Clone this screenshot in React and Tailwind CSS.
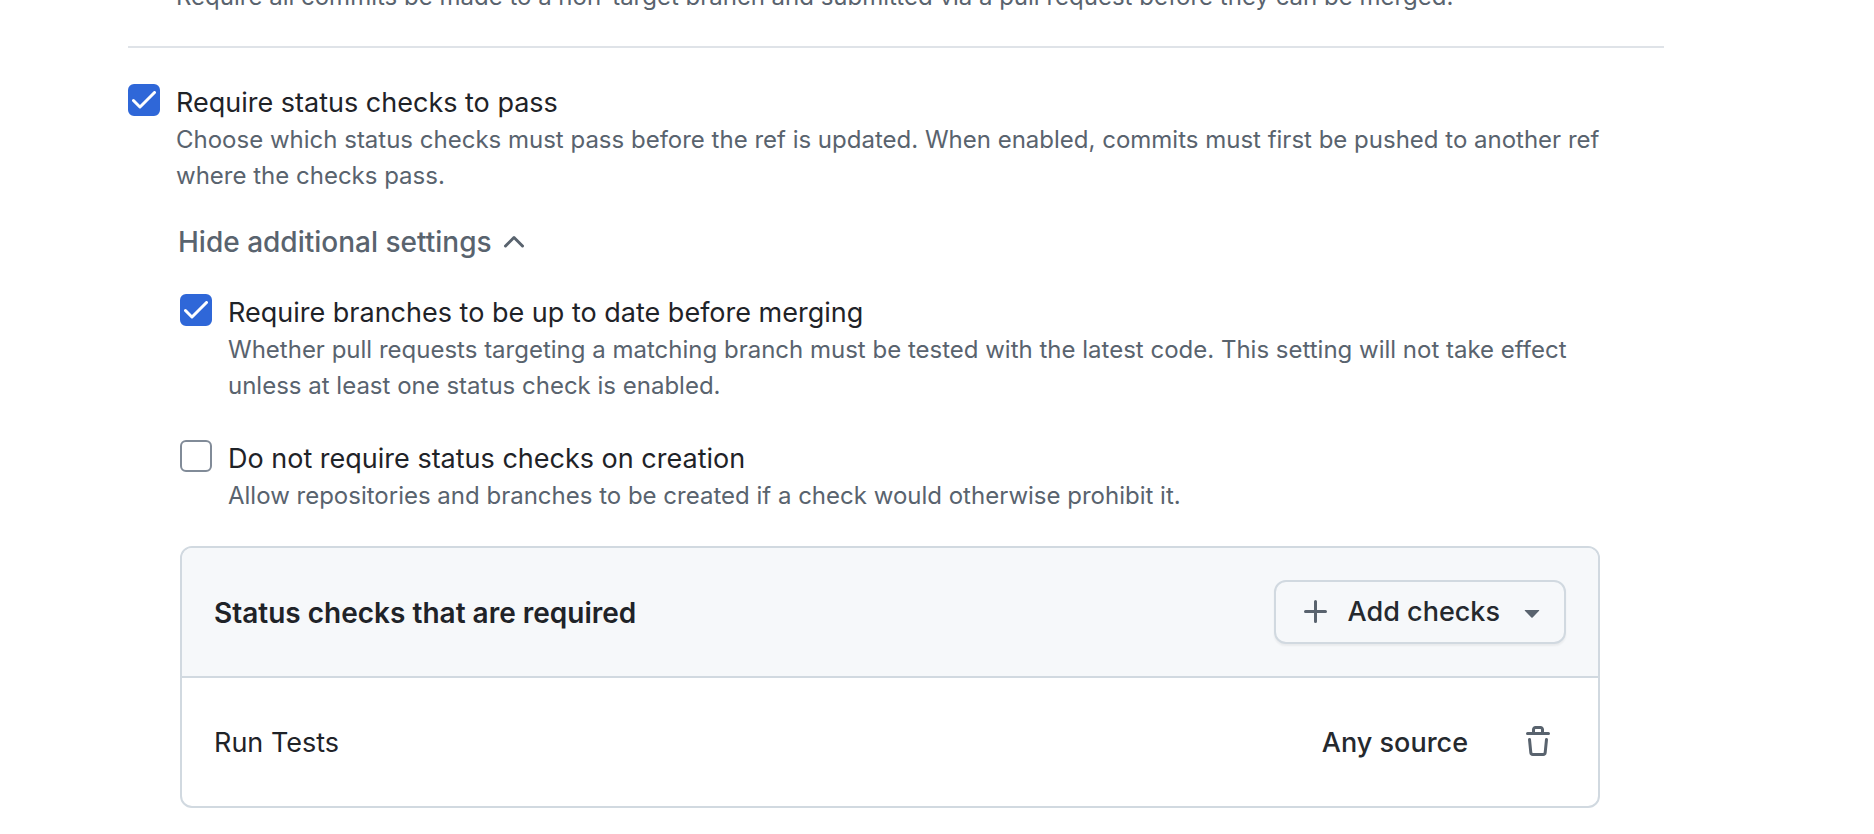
import { useState } from "react";

const CHECK =
  "M11.78.22a.75.75 0 0 1 0 1.061L4.52 8.541a.75.75 0 0 1-1.062 0L.202 5.285a.75.75 0 0 1 1.061-1.061l2.725 2.723L10.718.22a.75.75 0 0 1 1.062 0Z";
const CHEVRON_UP =
  "M3.22 10.53a.749.749 0 0 1 0-1.06l4.25-4.25a.749.749 0 0 1 1.06 0l4.25 4.25a.749.749 0 1 1-1.06 1.06L8 6.811 4.28 10.53a.749.749 0 0 1-1.06 0Z";
const PLUS =
  "M7.75 2a.75.75 0 0 1 .75.75V7h4.25a.75.75 0 0 1 0 1.5H8.5v4.25a.75.75 0 0 1-1.5 0V8.5H2.75a.75.75 0 0 1 0-1.5H7V2.75A.75.75 0 0 1 7.75 2Z";
const TRIANGLE_DOWN =
  "m4.427 7.427 3.396 3.396a.25.25 0 0 0 .354 0l3.396-3.396A.25.25 0 0 0 11.396 7H4.604a.25.25 0 0 0-.177.427Z";
const TRASH =
  "M11 1.75V3h2.25a.75.75 0 0 1 0 1.5H2.75a.75.75 0 0 1 0-1.5H5V1.75C5 .784 5.784 0 6.75 0h2.5C10.216 0 11 .784 11 1.75ZM4.496 6.675l.66 6.6a.25.25 0 0 0 .249.225h5.19a.25.25 0 0 0 .249-.225l.66-6.6a.75.75 0 0 1 1.492.149l-.66 6.6A1.748 1.748 0 0 1 10.595 15h-5.19a1.75 1.75 0 0 1-1.741-1.575l-.66-6.6a.75.75 0 1 1 1.492-.15ZM6.5 1.75V3h3V1.75a.25.25 0 0 0-.25-.25h-2.5a.25.25 0 0 0-.25.25Z";

function Icon({ path }) {
  return (
    <svg viewBox="0 0 16 16" className="size-8 shrink-0 fill-[#59636e]" aria-hidden="true">
      <path d={path} />
    </svg>
  );
}

function CheckOption({ id, title, description, defaultChecked }) {
  return (
    <div className="flex items-start gap-4">
      <span className="mt-px grid shrink-0 place-items-center">
        <input
          id={id}
          type="checkbox"
          defaultChecked={defaultChecked}
          aria-describedby={id + "-description"}
          className="peer col-start-1 row-start-1 size-8 appearance-none rounded-md border-2 border-[#818b98] bg-white checked:border-[#2f67d8] checked:bg-[#2f67d8]"
        />
        <svg
          viewBox="0 0 12 9"
          className="pointer-events-none invisible col-start-1 row-start-1 h-[18px] w-6 fill-white peer-checked:visible"
          aria-hidden="true"
        >
          <path d={CHECK} />
        </svg>
      </span>
      <div className="min-w-0 flex-1">
        <label htmlFor={id} className="block text-[27px] leading-[39px]">
          {title}
        </label>
        <p id={id + "-description"} className="text-2xl leading-9 text-[#59636e]">
          {description}
        </p>
      </div>
    </div>
  );
}

export default function App() {
  const [open, setOpen] = useState(true);

  return (
    <main className="overflow-hidden bg-white pr-[210px] pb-[26px] pl-32 font-['Inter',sans-serif] text-[#1f2328]">
      <div className="-mt-[21px] border-b-2 border-[#dfe3e8] pb-[31px] pl-12">
        <p className="text-2xl leading-9 text-[#59636e]">
          Require all commits be made to a non-target branch and submitted via a pull request before they can be merged.
        </p>
      </div>

      <section className="pt-[35px] pr-16">
        <CheckOption
          id="status-checks"
          title="Require status checks to pass"
          description="Choose which status checks must pass before the ref is updated. When enabled, commits must first be pushed to another ref where the checks pass."
          defaultChecked
        />

        <button
          type="button"
          aria-expanded={open}
          onClick={() => setOpen(!open)}
          className="mt-[27px] ml-[50px] flex items-center gap-1.5 text-[28px] leading-[42px] font-medium text-[#59636e]"
        >
          Hide additional settings
          <Icon path={CHEVRON_UP} />
        </button>

        {open && (
          <div className="mt-[30px] pl-[52px]">
            <div className="flex flex-col gap-[35px]">
              <CheckOption
                id="up-to-date"
                title="Require branches to be up to date before merging"
                description="Whether pull requests targeting a matching branch must be tested with the latest code. This setting will not take effect unless at least one status check is enabled."
                defaultChecked
              />
              <CheckOption
                id="skip-on-creation"
                title="Do not require status checks on creation"
                description="Allow repositories and branches to be created if a check would otherwise prohibit it."
              />
            </div>

            <div className="mt-8 overflow-hidden rounded-xl border-2 border-[#d1d9e0] text-[27px] leading-[42px]">
              <div className="flex items-center justify-between border-b-2 border-[#d1d9e0] bg-[#f6f8fa] px-8 py-8">
                <h2 className="pt-0.5 text-[28px] font-semibold">Status checks that are required</h2>
                <button
                  type="button"
                  className="flex h-16 items-center gap-4 rounded-xl border-2 border-[#d1d9e0] bg-[#f6f8fa] pr-4 pl-6 font-medium text-[#25292e] shadow-[0_2px_2px_rgba(31,35,40,0.06)]"
                >
                  <Icon path={PLUS} />
                  Add checks
                  <Icon path={TRIANGLE_DOWN} />
                </button>
              </div>
              <div className="flex items-center px-8 py-8">
                <span className="flex-1 pt-0.5">Run Tests</span>
                <span className="mr-[42px] pt-0.5 font-medium text-[#25292e]">Any source</span>
                <button type="button" aria-label="Remove Run Tests" className="flex h-16 items-center px-3">
                  <Icon path={TRASH} />
                </button>
              </div>
            </div>
          </div>
        )}
      </section>
    </main>
  );
}
